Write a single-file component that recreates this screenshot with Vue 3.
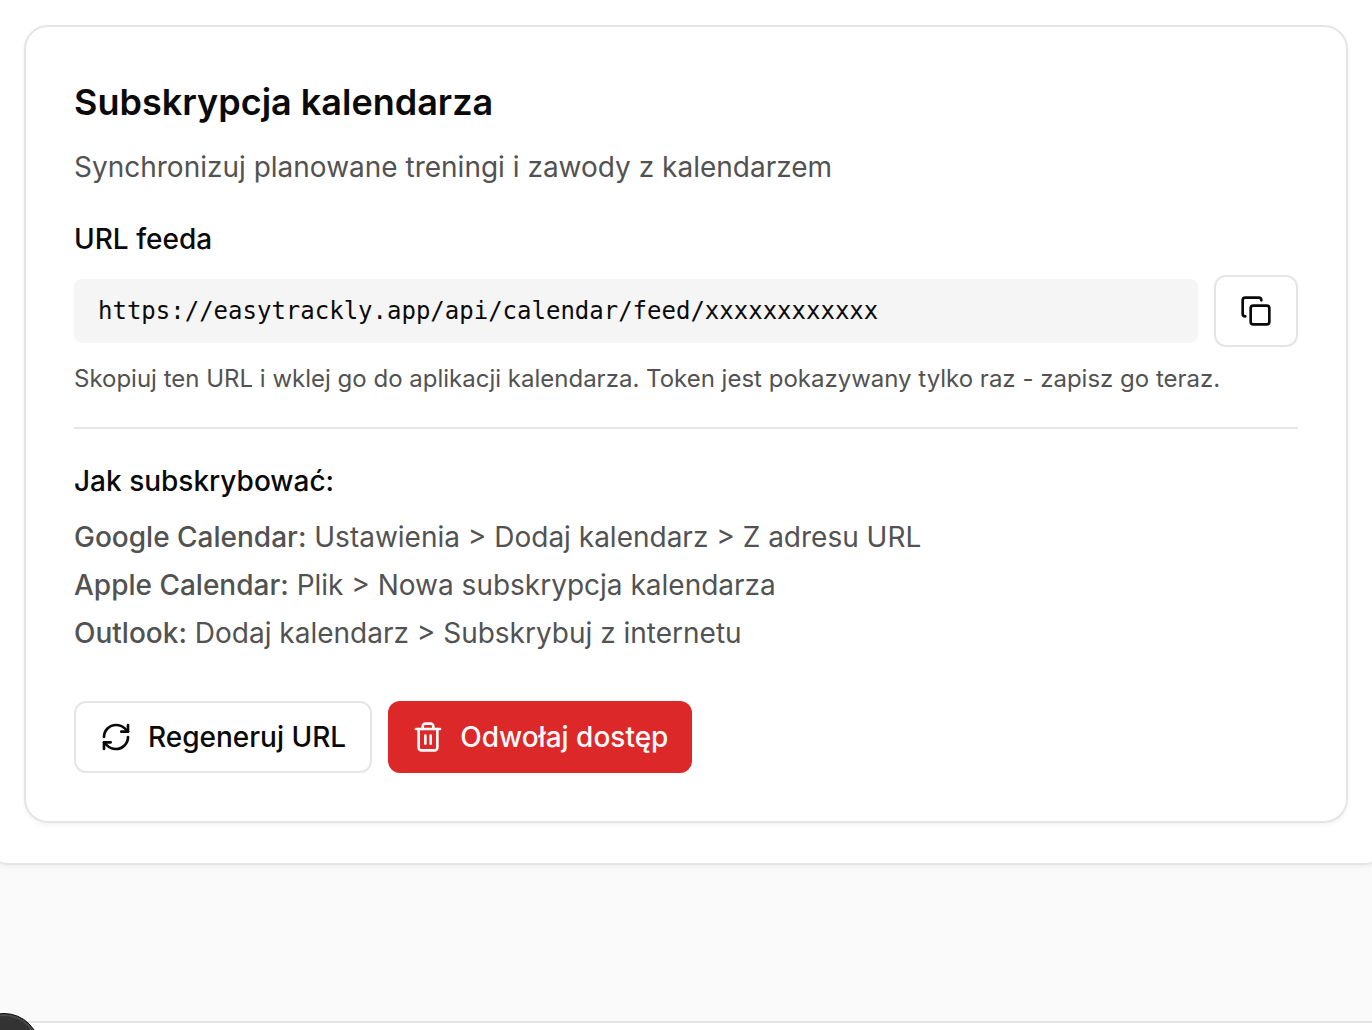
<script setup>
import { ref } from 'vue'

const feedUrl = ref('https://easytrackly.app/api/calendar/feed/xxxxxxxxxxxx')
const steps = [
  { app: 'Google Calendar:', path: 'Ustawienia > Dodaj kalendarz > Z adresu URL' },
  { app: 'Apple Calendar:', path: 'Plik > Nowa subskrypcja kalendarza' },
  { app: 'Outlook:', path: 'Dodaj kalendarz > Subskrybuj z internetu' },
]
</script>

<template>
  <div class="page">
    <main class="panel">
      <section class="card">
        <h1>Subskrypcja kalendarza</h1>
        <p class="lead">Synchronizuj planowane treningi i zawody z kalendarzem</p>
        <h2 class="label">URL feeda</h2>
        <div class="feed">
          <code>{{ feedUrl }}</code>
          <button class="btn outline copy" type="button" aria-label="Kopiuj URL">
            <svg class="icon" viewBox="0 0 24 24">
              <rect x="8" y="8" width="14" height="14" rx="2" />
              <path d="M4 16c-1.1 0-2-.9-2-2V4c0-1.1.9-2 2-2h10c1.1 0 2 .9 2 2" />
            </svg>
          </button>
        </div>
        <p class="hint">Skopiuj ten URL i wklej go do aplikacji kalendarza. Token jest pokazywany tylko raz - zapisz go teraz.</p>
        <div class="how">
          <h2>Jak subskrybować:</h2>
          <ul>
            <li v-for="s in steps" :key="s.app"><strong>{{ s.app }}</strong> {{ s.path }}</li>
          </ul>
        </div>
        <div class="actions">
          <button class="btn outline" type="button">
            <svg class="icon" viewBox="0 0 24 24">
              <path d="M3 12a9 9 0 0 1 9-9 9.75 9.75 0 0 1 6.74 2.74L21 8" />
              <path d="M21 3v5h-5" />
              <path d="M21 12a9 9 0 0 1-9 9 9.75 9.75 0 0 1-6.74-2.74L3 16" />
              <path d="M8 16H3v5" />
            </svg>
            Regeneruj URL
          </button>
          <button class="btn danger" type="button">
            <svg class="icon" viewBox="0 0 24 24">
              <path d="M3 6h18" />
              <path d="M19 6v14c0 1-1 2-2 2H7c-1 0-2-1-2-2V6" />
              <path d="M8 6V4c0-1 1-2 2-2h4c1 0 2 1 2 2v2" />
              <path d="M10 11v6M14 11v6" />
            </svg>
            Odwołaj dostęp
          </button>
        </div>
      </section>
    </main>
    <footer class="footer"></footer>
    <div class="bubble"></div>
  </div>
</template>

<style>
body {
  margin: 0;
  background: #fafafa;
}
</style>

<style scoped>
.page {
  position: relative;
  box-sizing: border-box;
  min-height: 100vh;
  display: flex;
  flex-direction: column;
  overflow: hidden;
  font-family: Inter, 'Liberation Sans', sans-serif;
  font-size: 28px;
  line-height: 40px;
  color: #0a0a0a;
  background: #fafafa;
}
.panel {
  margin: 0 -8px;
  padding: 25px 32px 40px;
  background: #fff;
  border-bottom: 2px solid #e5e5e5;
  border-radius: 0 0 16px 16px;
  box-shadow: 0 2px 4px rgba(0, 0, 0, 0.05);
}
.card {
  padding: 48px;
  border: 2px solid #e5e5e5;
  border-radius: 24px;
  box-shadow: 0 2px 4px rgba(0, 0, 0, 0.05);
}
h1, h2, p, ul {
  margin: 0;
}
h1 {
  font-size: 36px;
  line-height: 54px;
  font-weight: 600;
}
h2 {
  font-size: 28px;
  font-weight: 500;
}
.lead {
  margin-top: 18px;
  color: #525252;
}
.label {
  margin-top: 32px;
}
.feed {
  display: flex;
  align-items: center;
  gap: 16px;
  margin-top: 16px;
}
code {
  flex: 1;
  min-width: 0;
  padding: 16px 24px;
  border-radius: 8px;
  background: #f5f5f5;
  font-family: 'DejaVu Sans Mono', monospace;
  font-size: 24px;
  line-height: 32px;
}
.btn {
  display: flex;
  align-items: center;
  gap: 16px;
  box-sizing: border-box;
  height: 72px;
  padding: 0 24px;
  border: 0;
  border-radius: 12px;
  font: inherit;
  font-weight: 500;
  color: inherit;
}
.outline {
  border: 2px solid #e5e5e5;
  background: #fff;
}
.danger {
  background: #dc2828;
  color: #fafafa;
}
.icon {
  width: 32px;
  height: 32px;
  fill: none;
  stroke: currentColor;
  stroke-width: 2;
  stroke-linecap: round;
  stroke-linejoin: round;
}
.hint {
  margin-top: 16px;
  font-size: 24px;
  line-height: 32px;
  color: #525252;
}
.how {
  margin-top: 32px;
  padding-top: 32px;
  border-top: 2px solid #e5e5e5;
}
ul {
  margin-top: 16px;
  padding: 0;
  list-style: none;
  display: flex;
  flex-direction: column;
  gap: 8px;
  color: #525252;
}
strong {
  font-weight: 500;
}
.actions {
  display: flex;
  gap: 16px;
  margin-top: 48px;
}
.footer {
  margin-top: 156px;
  flex: 1;
  border-top: 2px solid #e5e5e5;
  background: #fff;
}
.bubble {
  position: absolute;
  left: -32px;
  bottom: -55px;
  box-sizing: border-box;
  width: 72px;
  height: 72px;
  border: 1px solid #0a0a0a;
  border-radius: 50%;
  background: #333;
  box-shadow: inset 0 0 0 2px #4a4a4a;
}
</style>
